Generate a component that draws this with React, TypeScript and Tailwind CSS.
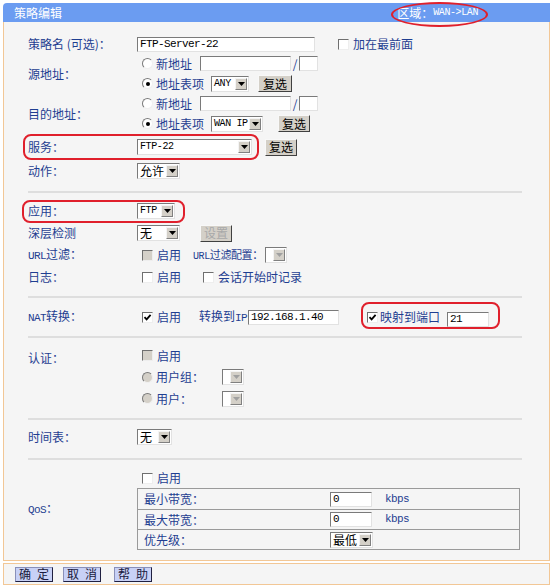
import React from 'react';

const lbl = 'text-[#1f3e91]';
const mono = "font-['Liberation_Mono',monospace] text-[11px] tracking-[-0.6px] text-black";
const selMono = "font-['Liberation_Mono',monospace] text-[10px] tracking-[-0.4px] text-black";
const latin = "font-['Liberation_Mono',monospace] text-[11px] tracking-[-0.6px]";

function Input({ w, value }: { w: string; value?: string }) {
  return (
    <span
      className={`inline-flex h-[15px] items-center overflow-hidden whitespace-nowrap bg-white border border-t-[#7a7a7a] border-l-[#7a7a7a] border-r-[#e2e2e2] border-b-[#e2e2e2] pl-[2px] ${w}`}
    >
      <span className={`leading-[13px] ${mono}`}>{value}</span>
    </span>
  );
}

function Select({ w, value, dim, cjk }: { w: string; value?: string; dim?: boolean; cjk?: boolean }) {
  return (
    <span
      className={`inline-flex h-[16px] items-center bg-white border border-t-[#7a7a7a] border-l-[#7a7a7a] border-r-[#e2e2e2] border-b-[#e2e2e2] ${w}`}
    >
      <span
        className={`min-w-0 flex-1 whitespace-nowrap pl-[2px] leading-[14px] ${cjk ? 'text-[12px] text-black' : selMono}`}
      >
        {value}
      </span>
      <span className="mr-[1px] flex h-[12px] w-[12px] shrink-0 items-center justify-center bg-[#d4d0c8] border border-t-[#f4f4f4] border-l-[#f4f4f4] border-r-[#808080] border-b-[#808080]">
        <svg width="7" height="4" viewBox="0 0 7 4">
          <path d="M0 0h7L3.5 4z" fill={dim ? '#a0a0a0' : '#000'} />
        </svg>
      </span>
    </span>
  );
}

function Btn({ children, w, disabled }: { children: React.ReactNode; w: string; disabled?: boolean }) {
  return (
    <span
      className={`inline-flex h-[17px] items-center justify-center bg-[#d4d0c8] border border-t-[#f8f8f8] border-l-[#f8f8f8] border-r-[#404040] border-b-[#404040] text-[12px] leading-none ${disabled ? 'text-[#a8a8a8]' : 'text-black'} ${w}`}
    >
      {children}
    </span>
  );
}

function Check({ checked, disabled }: { checked?: boolean; disabled?: boolean }) {
  return (
    <span
      className={`inline-flex h-[11px] w-[11px] shrink-0 items-center justify-center border border-t-[#6f6f6f] border-l-[#6f6f6f] border-r-[#eeeeee] border-b-[#eeeeee] ${disabled ? 'bg-[#d4d0c8]' : 'bg-white'}`}
    >
      {checked && (
        <svg width="9" height="9" viewBox="0 0 9 9">
          <path d="M1.5 4.2 L3.6 6.4 L7.6 1.8" stroke="#000" strokeWidth="1.8" fill="none" />
        </svg>
      )}
    </span>
  );
}

function Radio({ checked, disabled }: { checked?: boolean; disabled?: boolean }) {
  return (
    <span
      className={`inline-flex h-[11px] w-[11px] shrink-0 items-center justify-center rounded-full border border-t-[#7a7a7a] border-l-[#7a7a7a] border-r-[#f0f0f0] border-b-[#f0f0f0] ${disabled ? 'bg-[#d4d0c8]' : 'bg-white'}`}
    >
      {checked && <span className="h-[4px] w-[4px] rounded-full bg-black" />}
    </span>
  );
}

function Row({ label, h, children }: { label?: React.ReactNode; h: string; children?: React.ReactNode }) {
  return (
    <div className={`flex items-center ${h}`}>
      <div className={`w-[109px] whitespace-nowrap text-[12px] ${lbl}`}>{label}</div>
      <div className="flex items-center whitespace-nowrap">{children}</div>
    </div>
  );
}

function Divider() {
  return <div className="ml-[24px] w-[494px] h-[2px] bg-[#dedede]" />;
}

function Footer({ children }: { children: React.ReactNode }) {
  return (
    <span className="inline-flex h-[15px] w-[38px] items-center justify-center gap-[6px] bg-[#c8d1f6] border border-t-[#8a90b8] border-l-[#8a90b8] border-r-[#202040] border-b-[#202040] text-[12px] leading-none text-[#1a1a40]">
      {children}
    </span>
  );
}

export default function App() {
  return (
    <div className="relative w-[553px] h-[587px] bg-white px-[3px] pt-[3px] font-['Noto_Sans_CJK_SC',sans-serif] text-[12px]">
      {/* header */}
      <div className="flex h-[19px] items-center justify-between rounded-tl-[4px] bg-[#6b9cf1] pl-[11px] pr-[72px] text-white">
        <span className="text-[12px]">策略编辑</span>
        <span className="flex items-center whitespace-nowrap text-[12px]">
          区域：
          <span className="font-['Liberation_Mono',monospace] text-[10px] tracking-[-0.4px]">WAN-&gt;LAN</span>
        </span>
      </div>

      {/* main panel */}
      <div className="h-[539px] border-x border-b border-[#f2c796] bg-[#f5f5f5] pt-[12px] pl-[24px]">
        <Row label="策略名 (可选)：" h="h-[20px]">
          <Input w="w-[178px]" value="FTP-Server-22" />
          <span className="ml-[23px] flex items-center gap-[4px]">
            <Check />
            <span className={lbl}>加在最前面</span>
          </span>
        </Row>

        <div className="flex items-center">
          <div className={`w-[109px] ${lbl}`}>源地址：</div>
          <div>
            <div className="flex h-[19px] items-center">
              <span className="flex w-[63px] items-center gap-[3px] pl-[5px]">
                <Radio />
                <span className={lbl}>新地址</span>
              </span>
              <Input w="w-[91px]" />
              <span className="w-[8px] text-center text-[#1f3e91]">/</span>
              <Input w="w-[19px]" />
            </div>
            <div className="flex h-[21px] items-center">
              <span className="flex w-[74px] items-center gap-[3px] pl-[5px]">
                <Radio checked />
                <span className={lbl}>地址表项</span>
              </span>
              <Select w="w-[38px]" value="ANY" />
              <span className="ml-[9px]">
                <Btn w="w-[34px]">复选</Btn>
              </span>
            </div>
          </div>
        </div>

        <div className="flex items-center">
          <div className={`w-[109px] ${lbl}`}>目的地址：</div>
          <div>
            <div className="flex h-[19px] items-center">
              <span className="flex w-[63px] items-center gap-[3px] pl-[5px]">
                <Radio />
                <span className={lbl}>新地址</span>
              </span>
              <Input w="w-[91px]" />
              <span className="w-[8px] text-center text-[#1f3e91]">/</span>
              <Input w="w-[19px]" />
            </div>
            <div className="flex h-[21px] items-center">
              <span className="flex w-[74px] items-center gap-[3px] pl-[5px]">
                <Radio checked />
                <span className={lbl}>地址表项</span>
              </span>
              <Select w="w-[52px]" value="WAN IP" />
              <span className="ml-[15px]">
                <Btn w="w-[32px]">复选</Btn>
              </span>
            </div>
          </div>
        </div>

        <Row label="服务：" h="h-[26px]">
          <Select w="w-[115px]" value="FTP-22" />
          <span className="ml-[13px]">
            <Btn w="w-[32px]">复选</Btn>
          </span>
        </Row>
        <Row label="动作：" h="h-[22px]">
          <Select w="w-[43px]" value="允许" cjk />
        </Row>

        <div className="h-[18px] -ml-[24px] pt-[9px]">
          <Divider />
        </div>

        <Row label="应用：" h="h-[22px]">
          <Select w="w-[38px]" value="FTP" />
        </Row>
        <Row label="深层检测" h="h-[22px]">
          <Select w="w-[43px]" value="无" cjk />
          <span className="ml-[20px]">
            <Btn w="w-[32px]" disabled>设置</Btn>
          </span>
        </Row>
        <Row
          label={
            <>
              <span className={latin}>URL</span>过滤：
            </>
          }
          h="h-[22px]"
        >
          <span className="flex w-[56px] items-center gap-[4px] pl-[5px]">
            <Check disabled />
            <span className={lbl}>启用</span>
          </span>
          <span className={`w-[72px] whitespace-nowrap text-[11px] tracking-[-0.4px] ${lbl}`}>
            <span className="font-['Liberation_Mono',monospace] text-[10px]">URL</span>过滤配置：
          </span>
          <Select w="w-[22px]" dim />
        </Row>
        <Row label="日志：" h="h-[22px]">
          <span className="flex w-[66px] items-center gap-[4px] pl-[5px]">
            <Check />
            <span className={lbl}>启用</span>
          </span>
          <span className="flex items-center gap-[4px]">
            <Check />
            <span className={lbl}>会话开始时记录</span>
          </span>
        </Row>

        <div className="h-[16px] -ml-[24px] pt-[8px]">
          <Divider />
        </div>

        <Row
          label={
            <>
              <span className={latin}>NAT</span>转换：
            </>
          }
          h="h-[26px]"
        >
          <span className="flex w-[62px] items-center gap-[4px] pl-[5px]">
            <Check checked />
            <span className={lbl}>启用</span>
          </span>
          <span className={`w-[49px] whitespace-nowrap ${lbl}`}>
            转换到<span className={latin}>IP</span>
          </span>
          <Input w="w-[91px]" value="192.168.1.40" />
          <span className="ml-[28px] flex items-center gap-[2px]">
            <Check checked />
            <span className={lbl}>映射到端口</span>
          </span>
          <span className="ml-[7px]">
            <Input w="w-[42px]" value="21" />
          </span>
        </Row>

        <div className="h-[15px] -ml-[24px] pt-[6px]">
          <Divider />
        </div>

        <div className="flex">
          <div className={`w-[109px] pt-[4px] ${lbl}`}>认证：</div>
          <div>
            <div className="flex h-[21px] items-center">
              <span className="flex items-center gap-[4px] pl-[5px]">
                <Check disabled />
                <span className={lbl}>启用</span>
              </span>
            </div>
            <div className="flex h-[22px] items-center">
              <span className="flex w-[85px] items-center gap-[3px] pl-[5px]">
                <Radio disabled />
                <span className={lbl}>用户组：</span>
              </span>
              <Select w="w-[22px]" dim />
            </div>
            <div className="flex h-[21px] items-center">
              <span className="flex w-[85px] items-center gap-[3px] pl-[5px]">
                <Radio disabled />
                <span className={lbl}>用户：</span>
              </span>
              <Select w="w-[22px]" dim />
            </div>
          </div>
        </div>

        <div className="h-[18px] -ml-[24px] pt-[9px]">
          <Divider />
        </div>

        <Row label="时间表：" h="h-[20px]">
          <Select w="w-[35px]" value="无" cjk />
        </Row>

        <div className="h-[21px] -ml-[24px] pt-[11px]">
          <Divider />
        </div>

        <div className="flex items-center">
          <div className={`w-[109px] ${lbl}`}>
            <span className={latin}>QoS</span>：
          </div>
          <div>
            <div className="flex h-[20px] items-center">
              <span className="flex items-center gap-[4px] pl-[5px]">
                <Check />
                <span className={lbl}>启用</span>
              </span>
            </div>
            <div className="w-[383px] border border-[#9a9a9a]">
              {[
                ['最小带宽：', 'in'],
                ['最大带宽：', 'in'],
                ['优先级：', 'sel'],
              ].map(([t, k], i) => (
                <div key={t} className={`flex h-[20px] items-center ${i > 0 ? 'border-t border-[#9a9a9a]' : ''}`}>
                  <div className={`w-[192px] pl-[6px] ${lbl}`}>{t}</div>
                  <div className="flex items-center">
                    {k === 'in' ? (
                      <>
                        <Input w="w-[42px]" value="0" />
                        <span className={`ml-[13px] ${latin} ${lbl}`}>kbps</span>
                      </>
                    ) : (
                      <Select w="w-[43px]" value="最低" cjk />
                    )}
                  </div>
                </div>
              ))}
            </div>
          </div>
        </div>
      </div>

      {/* footer */}
      <div className="mt-[2px] flex h-[22px] items-center gap-[10px] border border-[#f2c796] bg-[#f5f5f5] pl-[11px]">
        <Footer>
          <span>确</span>
          <span>定</span>
        </Footer>
        <Footer>
          <span>取</span>
          <span>消</span>
        </Footer>
        <span className="ml-[3px]">
          <Footer>
            <span>帮</span>
            <span>助</span>
          </Footer>
        </span>
      </div>

      {/* annotations */}
      <div className="absolute left-[391px] top-[2px] h-[25px] w-[97px] rounded-[50%] border-2 border-[#e0202c]" />
      <div className="absolute left-[23px] top-[134px] h-[26px] w-[236px] rounded-[8px] border-2 border-[#e0202c]" />
      <div className="absolute left-[22px] top-[200px] h-[23px] w-[163px] rounded-[8px] border-2 border-[#e0202c]" />
      <div className="absolute left-[361px] top-[302px] h-[27px] w-[139px] rounded-[8px] border-2 border-[#e0202c]" />
    </div>
  );
}
